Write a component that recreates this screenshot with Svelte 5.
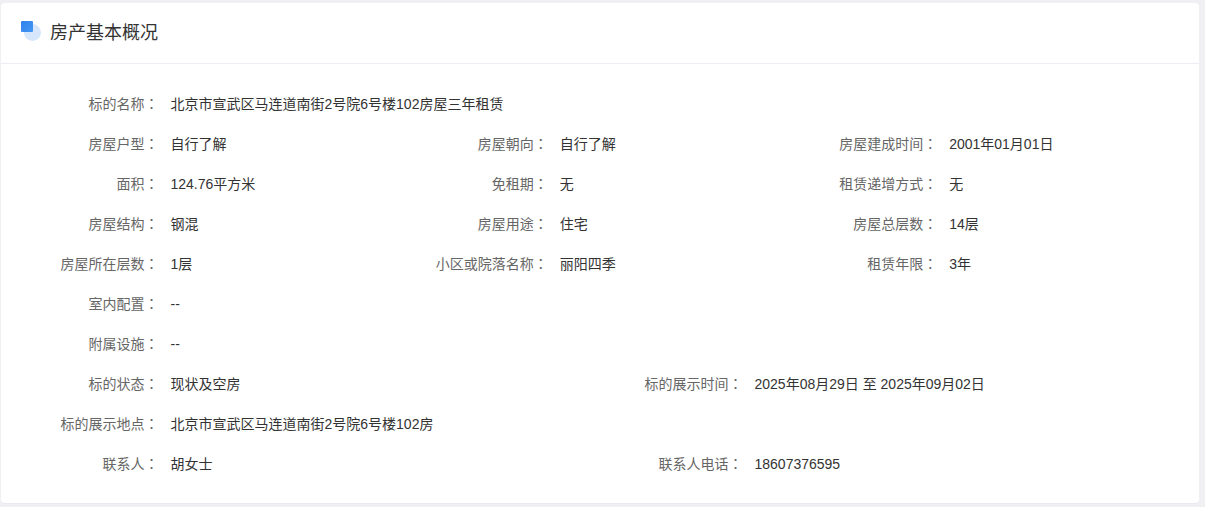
<script>
  const rows = [
    { label: "标的名称", value: "北京市宣武区马连道南街2号院6号楼102房屋三年租赁", span: 6 },
    { label: "房屋户型", value: "自行了解", span: 2 },
    { label: "房屋朝向", value: "自行了解", span: 2 },
    { label: "房屋建成时间", value: "2001年01月01日", span: 2 },
    { label: "面积", value: "124.76平方米", span: 2 },
    { label: "免租期", value: "无", span: 2 },
    { label: "租赁递增方式", value: "无", span: 2 },
    { label: "房屋结构", value: "钢混", span: 2 },
    { label: "房屋用途", value: "住宅", span: 2 },
    { label: "房屋总层数", value: "14层", span: 2 },
    { label: "房屋所在层数", value: "1层", span: 2 },
    { label: "小区或院落名称", value: "丽阳四季", span: 2 },
    { label: "租赁年限", value: "3年", span: 2 },
    { label: "室内配置", value: "--", span: 6 },
    { label: "附属设施", value: "--", span: 6 },
    { label: "标的状态", value: "现状及空房", span: 3 },
    { label: "标的展示时间", value: "2025年08月29日 至 2025年09月02日", span: 3 },
    { label: "标的展示地点", value: "北京市宣武区马连道南街2号院6号楼102房", span: 6 },
    { label: "联系人", value: "胡女士", span: 3 },
    { label: "联系人电话", value: "18607376595", span: 3 }
  ];
</script>

<div class="page">
  <section class="card">
    <header class="card-head">
      <span class="mark"></span>
      <h2>房产基本概况</h2>
    </header>
    <div class="info-grid">
      {#each rows as row}
        <div class="info-item" class:half={row.span === 3} class:full={row.span === 6}>
          <span class="label">{row.label}<span class="colon">：</span></span>
          <span class="value">{row.value}</span>
        </div>
      {/each}
    </div>
  </section>
</div>

<style>
  :global(body) {
    margin: 0;
    background: #f0f0f2;
    font-family: "Liberation Sans", "Noto Sans CJK SC", sans-serif;
  }

  .page {
    height: 507px;
    box-sizing: border-box;
    padding: 3px 6px 3px 1px;
    overflow: hidden;
  }

  .card {
    height: 501px;
    box-sizing: border-box;
    background: #fff;
    border-radius: 4px;
    border-bottom: 1px solid #e8eaf2;
  }

  .card-head {
    display: flex;
    align-items: center;
    height: 61px;
    padding-left: 20px;
    box-sizing: border-box;
    border-bottom: 1px solid #eceef3;
  }

  .mark {
    position: relative;
    width: 21px;
    height: 21px;
    margin-right: 8px;
    flex: none;
    top: -2px;
  }

  .mark::before {
    content: "";
    position: absolute;
    left: 3px;
    top: 3px;
    width: 17px;
    height: 17px;
    border-radius: 50%;
    background: #d6e7fc;
  }

  .mark::after {
    content: "";
    position: absolute;
    left: 0;
    top: 0;
    width: 11.5px;
    height: 11.5px;
    border-radius: 1px;
    background: linear-gradient(135deg, #1a76ea, #3a8ff2);
    opacity: 0.92;
  }

  h2 {
    margin: 0;
    font-size: 18px;
    font-weight: 400;
    line-height: 24px;
    color: #333;
  }

  .info-grid {
    display: grid;
    grid-template-columns: repeat(6, 1fr);
    grid-auto-rows: 40px;
    width: 1168px;
    margin-left: 16px;
    padding-top: 19px;
  }

  .info-item {
    grid-column: span 2;
    display: flex;
    align-items: center;
    font-size: 14px;
  }

  .info-item.half {
    grid-column: span 3;
  }

  .info-item.full {
    grid-column: span 6;
  }

  .label {
    width: 141.5px;
    flex: none;
    text-align: right;
    color: #666;
  }

  .colon {
    font-family: "Noto Sans CJK TC", sans-serif;
  }

  .value {
    margin-left: 12px;
    padding-top: 2px;
    line-height: 22px;
    color: #333;
  }
</style>
